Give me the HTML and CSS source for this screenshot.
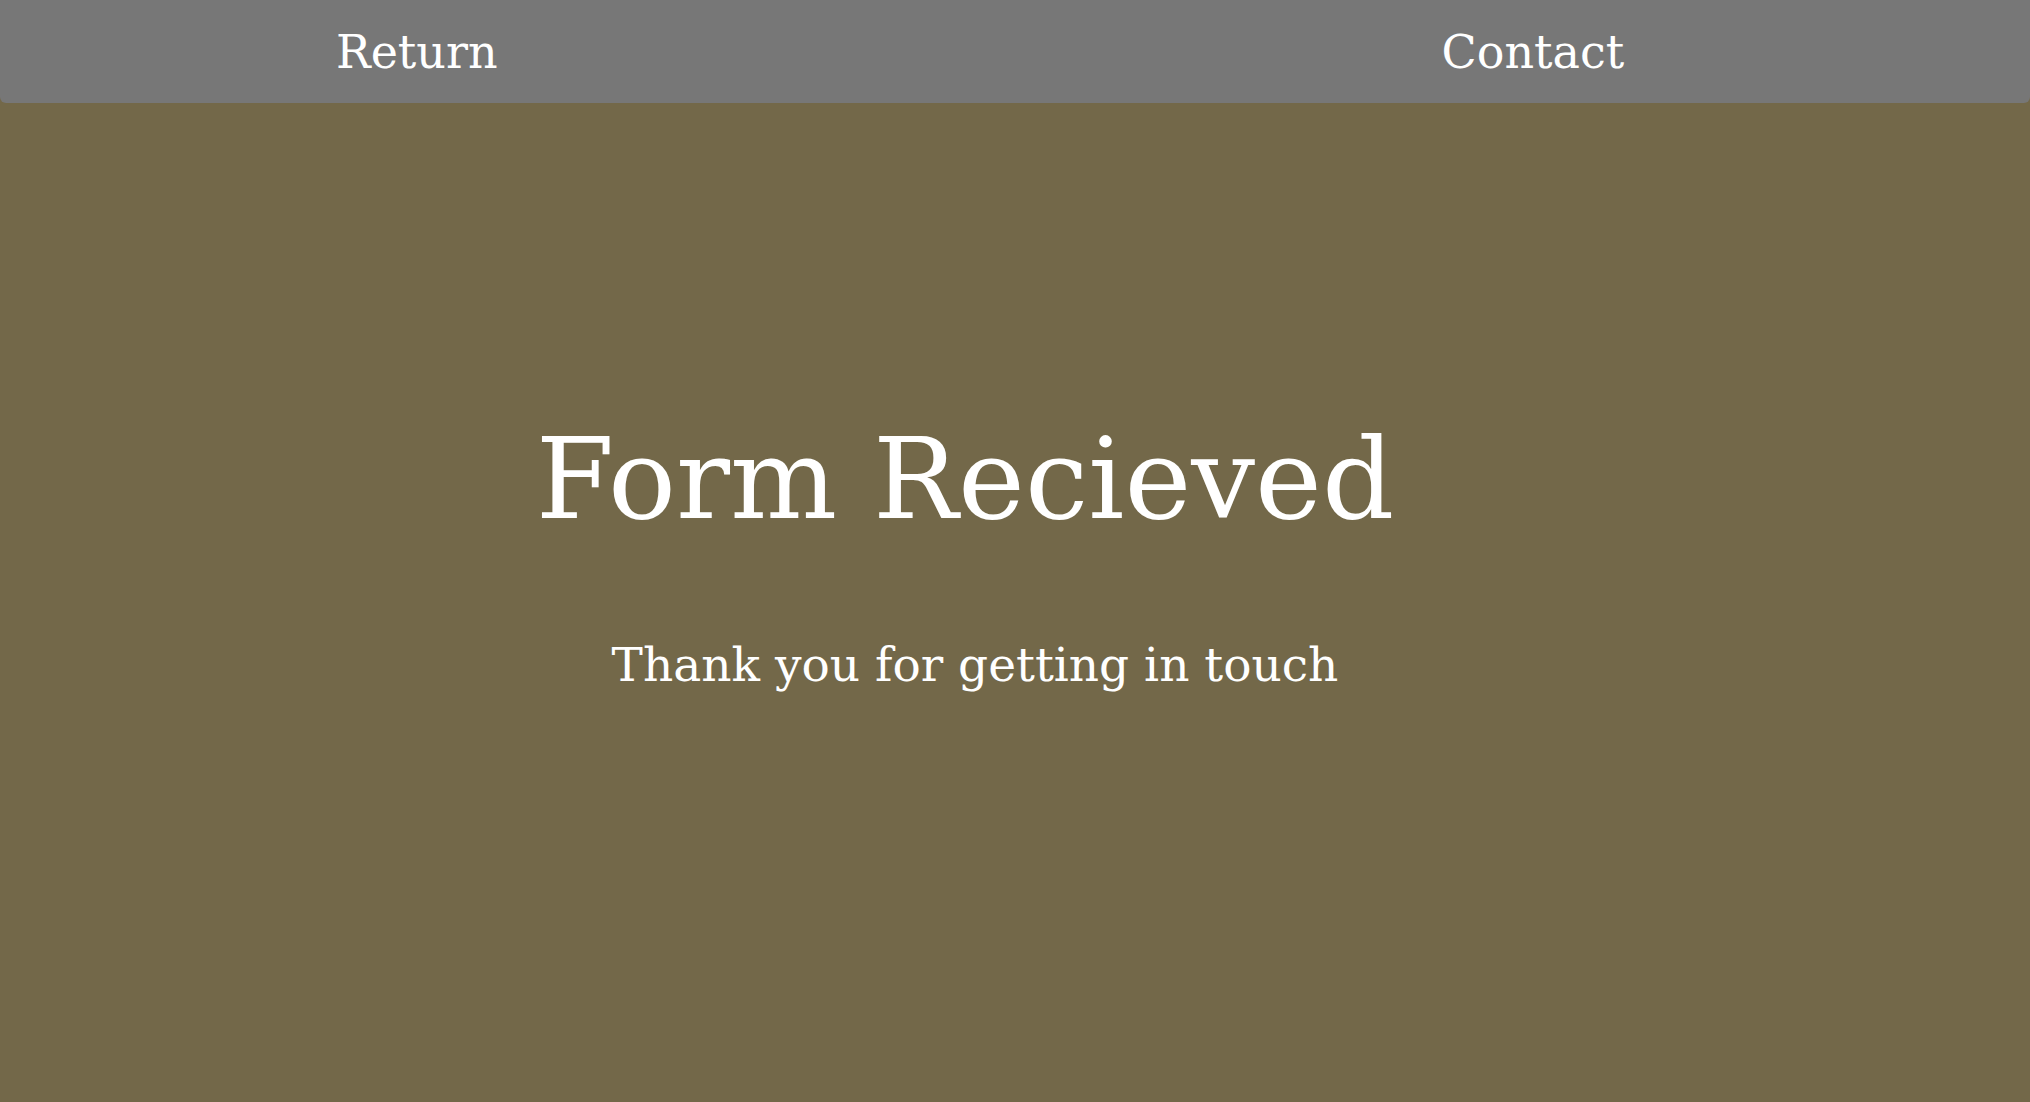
FILE: index.html
```html
<!DOCTYPE html>
<html lang="en">
<head>
<meta charset="utf-8">
<title>Form Recieved</title>
<link rel="stylesheet" href="styles.css">
</head>
<body>
<nav class="topnav">
  <a class="navlink navlink-return" href="#">Return</a>
  <a class="navlink navlink-contact" href="#">Contact</a>
</nav>
<main class="message">
  <h1 class="message-title">Form Recieved</h1>
  <p class="message-text">Thank you for getting in touch</p>
</main>
</body>
</html>
```
FILE: styles.css
```css
html, body {
  margin: 0;
  padding: 0;
}
body {
  background: #736849;
  color: #ffffff;
  font-family: "DejaVu Serif", "Liberation Serif", serif;
  min-height: 100vh;
}
.topnav {
  height: 103px;
  background: #777777;
  border-radius: 0 0 6px 6px;
  display: flex;
  align-items: center;
}
.navlink {
  color: #ffffff;
  text-decoration: none;
  font-size: 46px;
  line-height: 1;
}
.navlink-return {
  margin-left: 336px;
}
.navlink-contact {
  margin-left: 944px;
}
.message {
  display: flex;
  flex-direction: column;
  align-items: center;
  padding-right: 100px;
}
.message-title {
  margin: 309px 0 0;
  font-size: 113px;
  font-weight: normal;
  line-height: 1.2;
}
.message-text {
  margin: 89px 0 0 20px;
  font-size: 47px;
  line-height: 1.2;
}
```
